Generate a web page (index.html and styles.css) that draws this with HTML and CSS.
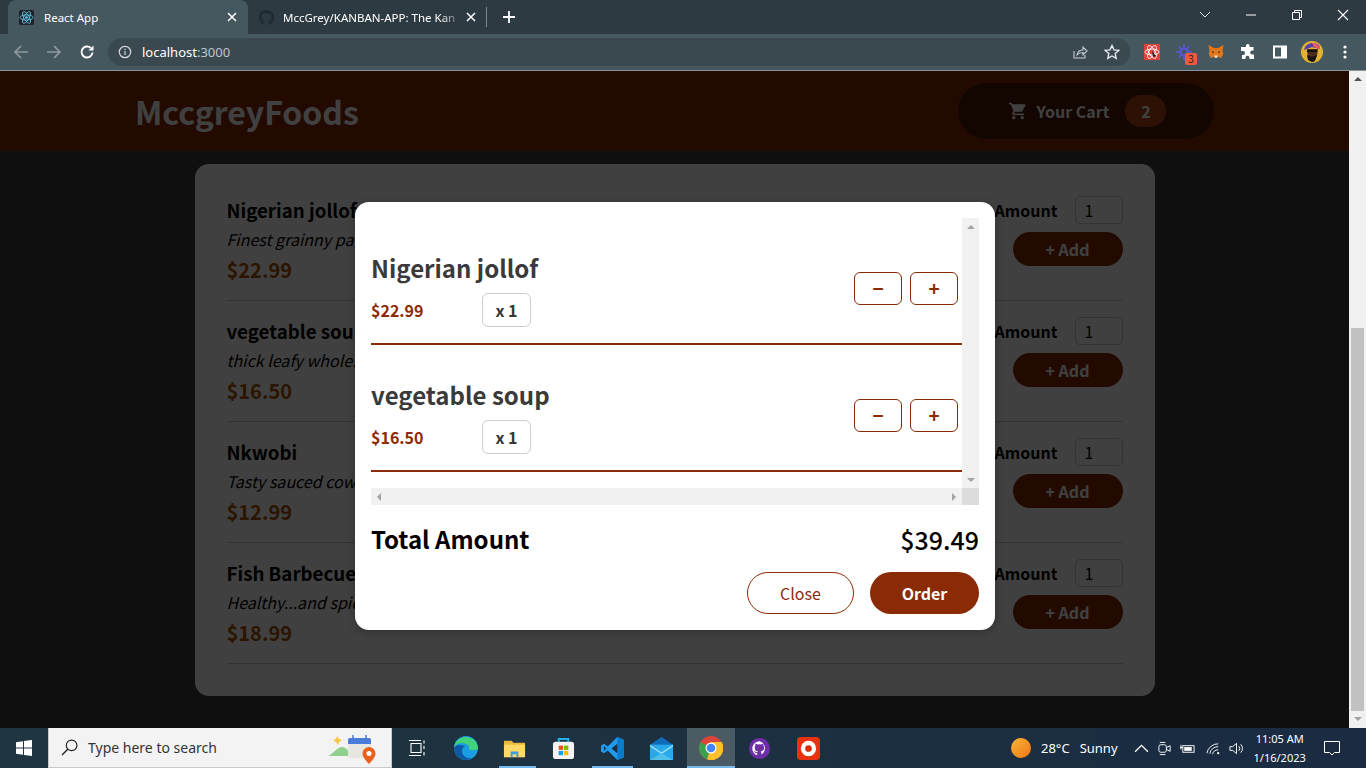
FILE: index.html
```html
<!DOCTYPE html>
<html lang="en">
<head>
    <meta charset="UTF-8">
    <meta name="viewport" content="width=device-width, initial-scale=1.0">
    <title>React App</title>
    <link rel="stylesheet" href="styles.css">
</head>
<body>
    <!-- browser chrome -->
    <div class="tabstrip">
        <div class="tab tab-active">
            <svg class="favicon" viewBox="0 0 16 16"><rect width="16" height="16" rx="2" fill="#20232a"/><g fill="none" stroke="#61dafb" stroke-width=".8"><ellipse cx="8" cy="8" rx="7" ry="2.8"/><ellipse cx="8" cy="8" rx="7" ry="2.8" transform="rotate(60 8 8)"/><ellipse cx="8" cy="8" rx="7" ry="2.8" transform="rotate(120 8 8)"/></g><circle cx="8" cy="8" r="1.4" fill="#61dafb"/></svg>
            <span class="tab-title">React App</span>
            <svg class="tab-close" viewBox="0 0 10 10"><path d="M1 1l8 8M9 1l-8 8" stroke="#fff" stroke-width="1.5"/></svg>
        </div>
        <div class="tab tab-other">
            <svg class="favicon" viewBox="0 0 16 16"><path fill="#202a30" d="M8 0a8 8 0 0 0-2.5 15.6c.4.1.5-.2.5-.4v-1.4c-2.2.5-2.7-1-2.7-1-.4-.9-.9-1.200-.9-1.200-.7-.5.1-.5.1-.5.8.1 1.200.8 1.200.8.7 1.200 1.900.9 2.300.7.1-.5.300-.9.500-1.100-1.800-.2-3.600-.9-3.600-4 0-.9.300-1.600.8-2.100-.1-.2-.4-1 .1-2.100 0 0 .7-.2 2.200.8a7.600 7.600 0 0 1 4 0c1.500-1 2.200-.8 2.200-.8.400 1.100.200 1.900.100 2.100.5.500.8 1.200.8 2.100 0 3.100-1.900 3.800-3.700 4 .3.300.6.800.6 1.500v2.200c0 .2.100.5.600.4A8 8 0 0 0 8 0z"/></svg>
            <span class="tab-title">MccGrey/KANBAN-APP: The Kan</span>
            <svg class="tab-close" viewBox="0 0 10 10"><path d="M1 1l8 8M9 1l-8 8" stroke="#fff" stroke-width="1.5"/></svg>
        </div>
        <span class="tab-sep"></span>
        <svg class="new-tab" viewBox="0 0 12 12"><path d="M6 0v12M0 6h12" stroke="#fff" stroke-width="1.800"/></svg>
        <div class="window-btns">
            <svg viewBox="0 0 46 16"><path d="M18 5l5 5 5-5" fill="none" stroke="#e8eaed"/></svg>
            <svg viewBox="0 0 46 16"><path d="M18 8h10" stroke="#fff"/></svg>
            <svg viewBox="0 0 46 16"><path d="M18.500 5.500h7v7h-7zM20.500 5.500v-2h7v7h-2" fill="none" stroke="#fff"/></svg>
            <svg viewBox="0 0 46 16"><path d="M18 3l10 10M28 3l-10 10" stroke="#fff" stroke-width="1.100"/></svg>
        </div>
    </div>
    <div class="toolbar">
        <svg class="nav-icon" viewBox="0 0 16 16"><path d="M15 8H2M8 2L2 8l6 6" fill="none" stroke="#8d999f" stroke-width="1.700"/></svg>
        <svg class="nav-icon" viewBox="0 0 16 16"><path d="M1 8h13M8 2l6 6-6 6" fill="none" stroke="#8d999f" stroke-width="1.700"/></svg>
        <svg class="nav-icon" viewBox="0 0 16 16"><path d="M13.500 8.500A5.500 5.500 0 1 1 11.800 4" fill="none" stroke="#fff" stroke-width="1.900"/><path d="M14.500 1.500v5h-5z" fill="#fff"/></svg>
        <div class="omnibox">
            <svg class="info-icon" viewBox="0 0 14 14"><circle cx="7" cy="7" r="5.700" fill="none" stroke="#d5d9db" stroke-width="1.200"/><path d="M7 6v4M7 3.800v1.300" stroke="#d5d9db" stroke-width="1.200"/></svg>
            <span class="url">localhost<span class="url-port">:3000</span></span>
            <svg class="omni-icon share" viewBox="0 0 16 16"><path d="M2 7v7h11v-3" fill="none" stroke="#c5cbce" stroke-width="1.100"/><path d="M5 11c.5-3 3-5 6-5V3l4 4-4 4V8.500c-2.500 0-4.500.8-6 2.500z" fill="none" stroke="#c5cbce" stroke-width="1.100"/></svg>
            <svg class="omni-icon" viewBox="0 0 16 16"><path d="M8 1.500l2 4.400 4.800.5-3.600 3.200 1 4.700L8 12l-4.200 2.300 1-4.700L1.200 6.400 6 5.900z" fill="none" stroke="#e8eaed" stroke-width="1.400"/></svg>
        </div>
        <div class="extensions">
            <svg class="ext ext-first" viewBox="0 0 16 16"><rect width="16" height="16" fill="#e2403a"/><g fill="none" stroke="#fff" stroke-width=".9"><ellipse cx="8" cy="8" rx="7" ry="3"/><ellipse cx="8" cy="8" rx="7" ry="3" transform="rotate(60 8 8)"/><ellipse cx="8" cy="8" rx="7" ry="3" transform="rotate(120 8 8)"/></g><path d="M8 7l4 5-3 1z" fill="#222"/></svg>
            <span class="ext-wrap">
                <svg class="ext" viewBox="0 0 16 16"><circle cx="8" cy="8" r="3.600" fill="none" stroke="#5b55e0" stroke-width="2"/><path d="M8 0v4M8 12v4M0 8h4M12 8h4M2.300 2.300l2.800 2.800M10.900 10.900l2.800 2.800M13.700 2.300l-2.800 2.800M5.100 10.900l-2.800 2.800" stroke="#5b55e0" stroke-width="1.500"/></svg>
                <span class="ext-badge">3</span>
            </span>
            <svg class="ext" viewBox="0 0 16 16"><path d="M.5 1l5.500 3h4l5.500-3-1 6 .8 3-2 4-2.800-1H5.500l-2.800 1-2-4 .8-3z" fill="#e2761b"/><path d="M4 7l2.500 1-2 1.500zM12 7l-2.500 1 2 1.500z" fill="#5a3a1e"/><path d="M6 11.500h4L9 14H7z" fill="#e8d9c6"/></svg>
            <svg class="ext" viewBox="0 0 16 16"><path fill="#fff" d="M6 1.500a1.800 1.800 0 0 1 3.500 0V3h4v3.500h-1.300a2 2 0 0 0 0 4H14V15H9.500v-1.300a2 2 0 0 0-4 0V15H2v-4h1a2 2 0 0 0 0-4H1V3h5z"/></svg>
            <svg class="ext" viewBox="0 0 16 16"><rect x="1" y="1.500" width="14" height="13" fill="#fff"/><rect x="3" y="3.500" width="6" height="9" fill="#46585f"/></svg>
            <svg class="avatar" viewBox="0 0 22 22"><circle cx="11" cy="11" r="11" fill="#e0b22f"/><path d="M3 9C4 2 13 0 18 4l1 4-8-2z" fill="#5a3fa8"/><path d="M11 2c4 0 7 2 8 6l-6-2z" fill="#ef5a6f"/><path d="M6 8h11l-1 7-4 6-5-3z" fill="#4a2c1c"/><path d="M6 9h10v2H6zM6 14c3 2 7 2 10 0l-2 6-3 1-4-2z" fill="#14100e"/></svg>
            <svg class="menu-dots" viewBox="0 0 4 14"><circle cx="2" cy="2" r="1.600" fill="#fff"/><circle cx="2" cy="7" r="1.600" fill="#fff"/><circle cx="2" cy="12" r="1.600" fill="#fff"/></svg>
        </div>
    </div>

    <!-- the page itself -->
    <div class="viewport">
        <div class="page">
            <header class="site-header">
                <h1 class="logo">MccgreyFoods</h1>
                <button class="cart-btn">
                    <svg class="cart-icon" viewBox="0 0 24 24"><path fill="#fff" d="M7 18a2 2 0 1 0 0 4 2 2 0 0 0 0-4zM1 2v2h2l3.600 7.600L5.200 14c-.1.300-.2.600-.2 1 0 1.100.9 2 2 2h12v-2H7.400c-.1 0-.2-.1-.2-.2v-.1L8.100 13h7.500c.7 0 1.400-.4 1.700-1l3.600-6.500c.1-.1.100-.3.100-.5 0-.6-.4-1-1-1H5.200l-.9-2H1zm16 16a2 2 0 1 0 0 4 2 2 0 0 0 0-4z"/></svg>
                    <span>Your Cart</span>
                    <span class="cart-count">2</span>
                </button>
            </header>
            <main class="meals-card">
                <div class="meal">
                    <div class="meal-info">
                        <h3>Nigerian jollof</h3>
                        <div class="meal-desc">Finest grainny parboiled rice</div>
                        <div class="meal-price">$22.99</div>
                    </div>
                    <form class="meal-form">
                        <label class="amount"><span>Amount</span><span class="amount-input">1</span></label>
                        <span class="add-btn">+ Add</span>
                    </form>
                </div>
                <div class="meal">
                    <div class="meal-info">
                        <h3>vegetable soup</h3>
                        <div class="meal-desc">thick leafy wholesome soup</div>
                        <div class="meal-price">$16.50</div>
                    </div>
                    <form class="meal-form">
                        <label class="amount"><span>Amount</span><span class="amount-input">1</span></label>
                        <span class="add-btn">+ Add</span>
                    </form>
                </div>
                <div class="meal">
                    <div class="meal-info">
                        <h3>Nkwobi</h3>
                        <div class="meal-desc">Tasty sauced cow foot</div>
                        <div class="meal-price">$12.99</div>
                    </div>
                    <form class="meal-form">
                        <label class="amount"><span>Amount</span><span class="amount-input">1</span></label>
                        <span class="add-btn">+ Add</span>
                    </form>
                </div>
                <div class="meal">
                    <div class="meal-info">
                        <h3>Fish Barbecue</h3>
                        <div class="meal-desc">Healthy...and spicy</div>
                        <div class="meal-price">$18.99</div>
                    </div>
                    <form class="meal-form">
                        <label class="amount"><span>Amount</span><span class="amount-input">1</span></label>
                        <span class="add-btn">+ Add</span>
                    </form>
                </div>
            </main>
        </div>
        <div class="page-scrollbar">
            <span class="arrow arrow-up arrow-dark"></span>
            <span class="page-thumb"></span>
            <span class="arrow arrow-down arrow-page"></span>
        </div>

        <div class="backdrop"></div>
        <div class="modal">
            <div class="cart-scroll">
                <div class="cart-items">
                    <div class="cart-item">
                        <div>
                            <h2>Nigerian jollof</h2>
                            <div class="cart-summary">
                                <span class="cart-price">$22.99</span>
                                <span class="cart-qty">x 1</span>
                            </div>
                        </div>
                        <div class="cart-actions">
                            <span class="qty-btn">−</span>
                            <span class="qty-btn">+</span>
                        </div>
                    </div>
                    <div class="cart-item">
                        <div>
                            <h2>vegetable soup</h2>
                            <div class="cart-summary">
                                <span class="cart-price">$16.50</span>
                                <span class="cart-qty">x 1</span>
                            </div>
                        </div>
                        <div class="cart-actions">
                            <span class="qty-btn">−</span>
                            <span class="qty-btn">+</span>
                        </div>
                    </div>
                </div>
                <div class="vbar"><span class="arrow arrow-up"></span><span class="arrow arrow-down"></span></div>
                <div class="hbar"><span class="arrow arrow-left"></span><span class="arrow arrow-right"></span></div>
                <div class="corner"></div>
            </div>
            <div class="total">
                <span>Total Amount</span>
                <span class="total-value">$39.49</span>
            </div>
            <div class="modal-actions">
                <span class="btn-close">Close</span>
                <span class="btn-order">Order</span>
            </div>
        </div>
    </div>

    <!-- windows taskbar -->
    <footer class="taskbar">
        <svg class="win-logo" viewBox="0 0 16 16"><path fill="#fff" d="M0 2.200l7-1v6.300H0zM8 1l8-1.100v7.600H8zM0 8.500h7v6.300l-7-1zM8 8.500h8V16l-8-1.100z"/></svg>
        <div class="searchbox">
            <svg class="search-icon" viewBox="0 0 16 16"><circle cx="10" cy="6" r="5" fill="none" stroke="#222" stroke-width="1.100"/><path d="M6.300 9.700L1 15" stroke="#222" stroke-width="1.300"/></svg>
            <span class="search-text">Type here to search</span>
            <svg class="search-art" viewBox="0 0 50 32"><path d="M1 24c4-1 9-9 14-9 4 0 8 5 9 9z" fill="#8fd28f"/><path d="M6 8l3-1 1-3 2 3 3 1-3 2-1 3-2-3z" fill="#f7c83e"/><rect x="21" y="6" width="23" height="20" rx="2" fill="#e8e6e0"/><path d="M21 8a2 2 0 0 1 2-2h19a2 2 0 0 1 2 2v4H21z" fill="#4a7bd8"/><path d="M26 3v5M39 3v5" stroke="#4a7bd8" stroke-width="1.500"/><path d="M42 15a6.500 6.500 0 0 0-6.500 6.500C35.500 26 42 32 42 32s6.500-6 6.500-10.500A6.500 6.500 0 0 0 42 15z" fill="#e8621c"/><circle cx="42" cy="21.500" r="2.500" fill="#fff"/></svg>
        </div>
        <div class="task-apps">
            <span class="task-app">
                <svg class="task-icon task-icon-sm" viewBox="0 0 16 16"><path d="M2 3.500h10v9H2zM0 .5h12M0 15.500h12M15 .5v3M15 6v3M15 12v3.500" fill="none" stroke="#fff" stroke-width="1.100"/></svg>
            </span>
            <span class="task-app">
                <svg class="task-icon task-icon-lg" viewBox="0 0 24 24"><circle cx="12" cy="12" r="12" fill="#1b9de2"/><path d="M24 13c0-7-5-12-12-12C6 1 1 5 0 11c3-4 8-5 12-3 3 1 4 4 3 6h7z" fill="#41d37c"/><path d="M0 12c0 7 6 12 12 12 2 0 4-1 6-2-5 1-10-2-10-7 0-2 1-4 3-5C6 8 1 9 0 12z" fill="#0c59a4"/></svg>
            </span>
            <span class="task-app task-open task-open-short">
                <svg class="task-icon" viewBox="0 0 24 24"><path d="M1 4h8l2 2h12v15H1z" fill="#e8b93e"/><rect x="1" y="8" width="22" height="13" fill="#ffd965"/><path d="M8 21v-6h8v6h-2v-3h-4v3z" fill="#3f9be0"/></svg>
            </span>
            <span class="task-app">
                <svg class="task-icon" viewBox="0 0 24 24"><path d="M7 5V2h10v3" fill="none" stroke="#1fb4e8" stroke-width="2"/><rect x="1" y="5" width="22" height="18" rx="3" fill="#f4f4f4"/><rect x="7" y="9" width="4.500" height="4.500" fill="#f25022"/><rect x="12.500" y="9" width="4.500" height="4.500" fill="#7fba00"/><rect x="7" y="14.500" width="4.500" height="4.500" fill="#00a4ef"/><rect x="12.500" y="14.500" width="4.500" height="4.500" fill="#ffb900"/></svg>
            </span>
            <span class="task-app task-open">
                <svg class="task-icon" viewBox="0 0 24 24"><path d="M17 0l7 3v18l-7 3L7 14l-4 3-3-2V9l3-2 4 3z" fill="#1f9cf0"/><path d="M17 0l7 3v18l-7 3z" fill="#0b7ccb"/><path d="M17 7l-6 5 6 5z" fill="#1e2f3b"/><path d="M3 9.500L5.500 12 3 14.500z" fill="#1e2f3b"/></svg>
            </span>
            <span class="task-app">
                <svg class="task-icon" viewBox="0 0 24 24"><path d="M0 8l12-8 12 8v16H0z" fill="#0f6cbd"/><path d="M0 8h24v16H0z" fill="#28a8ea"/><path d="M0 8l12 8 12-8v2l-12 8L0 10z" fill="#8fdcf7"/><path d="M12 17l12 7H0z" fill="#50c0ec"/></svg>
            </span>
            <span class="task-app task-open task-active">
                <svg class="task-icon task-icon-lg" viewBox="0 0 24 24"><circle cx="12" cy="12" r="12" fill="#db4437"/><path d="M12 12L1.600 6A12 12 0 0 0 8 23.300z" fill="#3a9f4e"/><path d="M12 6h10.700A12 12 0 0 1 8 23.300L12 12z" fill="#fbc02d"/><circle cx="12" cy="12" r="5.500" fill="#fff"/><circle cx="12" cy="12" r="4.300" fill="#4285f4"/></svg>
            </span>
            <span class="task-app">
                <svg class="task-icon" viewBox="0 0 24 24"><circle cx="12" cy="12" r="11" fill="#6f2da8"/><path fill="#fff" d="M12 4.500a7.500 7.500 0 0 0-2.400 14.600v-2.300c-1.800.4-2.300-.8-2.300-.8-.4-1-.9-1.200-.9-1.200-.7-.4.100-.4.100-.4.800 0 1.200.8 1.200.8.700 1.100 1.800.8 2.200.6.100-.5.300-.8.500-1-1.700-.2-3.400-.9-3.400-3.700 0-.8.300-1.500.8-2-.1-.2-.4-1 .1-2 0 0 .6-.2 2.100.8a7 7 0 0 1 3.800 0c1.500-1 2.100-.8 2.100-.8.400 1 .2 1.800.1 2 .5.500.8 1.200.8 2 0 2.900-1.800 3.500-3.400 3.700.3.200.5.700.5 1.400v2.100A7.500 7.500 0 0 0 12 4.500z"/></svg>
            </span>
            <span class="task-app">
                <svg class="task-icon" viewBox="0 0 24 24"><rect width="24" height="24" rx="4" fill="#e8320f"/><circle cx="12" cy="12" r="8" fill="#fff"/><circle cx="12" cy="12" r="3.500" fill="#d92d0c"/></svg>
            </span>
        </div>
        <div class="tray">
            <span class="sun"></span>
            <span class="weather">28°C</span>
            <span class="weather weather-word">Sunny</span>
            <svg class="tray-icon chevron" viewBox="0 0 14 14"><path d="M1 10l6-6 6 6" fill="none" stroke="#fff" stroke-width="1.200"/></svg>
            <svg class="tray-icon" viewBox="0 0 16 16"><rect x="2" y="4" width="8" height="8" rx="2" fill="none" stroke="#fff"/><path d="M10 7l4-2v6l-4-2M3 1.500h6M3 14.500h6" fill="none" stroke="#fff"/></svg>
            <svg class="tray-icon" viewBox="0 0 16 16"><rect x="3" y="5" width="12" height="7" fill="none" stroke="#fff"/><rect x="4.500" y="6.500" width="8" height="4" fill="#fff"/><path d="M0 7h3M1 4v5" stroke="#fff"/></svg>
            <svg class="tray-icon tray-wifi" viewBox="0 0 16 16"><path d="M1 13a12 12 0 0 1 12-10M4 13.500a9 9 0 0 1 9-7.500M7 14a5.500 5.500 0 0 1 6-4.500" fill="none" stroke="#fff"/><circle cx="13" cy="13" r="1.200" fill="#fff"/></svg>
            <svg class="tray-icon" viewBox="0 0 16 16"><path d="M1 6h3l4-3.500v11L4 10H1zM10.500 5.500a4 4 0 0 1 0 5M12.500 3.500a7 7 0 0 1 0 9" fill="none" stroke="#fff"/></svg>
            <div class="clock"><div>11:05 AM</div><div>1/16/2023</div></div>
            <svg class="notify" viewBox="0 0 16 16"><path d="M.5 1.500h15v11h-5L8 15l-2.500-2.500h-5z" fill="none" stroke="#fff"/></svg>
        </div>
    </footer>
</body>
</html>
```

FILE: styles.css
```css
* {
    box-sizing: border-box;
}

html, body {
    height: 100%;
    margin: 0;
    overflow: hidden;
}

body {
    display: flex;
    flex-direction: column;
    font-family: "Noto Sans CJK SC", "Source Sans Pro", "Noto Sans", sans-serif;
}

/* ---- browser chrome ---- */
.tabstrip {
    height: 34px;
    flex: none;
    display: flex;
    align-items: flex-end;
    padding-left: 8px;
    background: #2e3a41;
    font-family: "Noto Sans", "Liberation Sans", sans-serif;
    font-size: 11.5px;
    color: #fff;
}

.tab {
    height: 34px;
    display: flex;
    align-items: center;
}

.tab-active {
    width: 240px;
    padding: 0 11px;
    background: #46585f;
    border-radius: 8px 8px 0 0;
}

.tab-other {
    width: 238px;
    padding: 0 10px 0 11px;
}

.favicon {
    width: 15px;
    height: 15px;
    flex: none;
}

.tab-title {
    flex: 1;
    margin-left: 10px;
    white-space: nowrap;
}

.tab-other .tab-title {
    margin-left: 9px;
    -webkit-mask-image: linear-gradient(90deg, #000 88%, transparent);
    mask-image: linear-gradient(90deg, #000 88%, transparent);
}

.tab-close {
    width: 10px;
    height: 10px;
    flex: none;
    margin-left: 4px;
}

.tab-sep {
    width: 1px;
    height: 20px;
    margin: 0 16px 7px 0;
    background: #7b878d;
}

.new-tab {
    width: 12px;
    height: 12px;
    margin-bottom: 11px;
}

.window-btns {
    margin-left: auto;
    display: flex;
    align-self: center;
    margin-top: -5px;
}

.window-btns svg {
    width: 46px;
    height: 16px;
}

.toolbar {
    height: 37px;
    flex: none;
    display: flex;
    align-items: center;
    padding: 0 0 1px 13px;
    background: #46585f;
    border-bottom: 1px solid #8a969b;
}

.nav-icon {
    width: 16px;
    height: 16px;
    margin-right: 17px;
}

.omnibox {
    width: 1022px;
    height: 28px;
    margin-left: -4px;
    margin-top: 1px;
    display: flex;
    align-items: center;
    padding: 0 10px;
    background: #3a4850;
    border-radius: 14px;
}

.info-icon {
    width: 14px;
    height: 14px;
}

.url {
    flex: 1;
    margin-left: 10px;
    font-family: "Noto Sans", "Liberation Sans", sans-serif;
    font-size: 13px;
    color: #fff;
}

.url-port {
    color: #c0c6c9;
}

.omni-icon {
    width: 16px;
    height: 16px;
    margin-left: 16px;
}

.extensions {
    display: flex;
    align-items: center;
    margin-left: 14px;
}

.ext {
    width: 16px;
    height: 16px;
    display: block;
    margin-right: 16px;
}

.ext-wrap {
    position: relative;
}

.ext-badge {
    position: absolute;
    left: 9px;
    top: 9px;
    width: 12px;
    height: 12px;
    border-radius: 2px;
    background: #f05a3c;
    color: #222;
    font-size: 10px;
    line-height: 12px;
    text-align: center;
}

.avatar {
    width: 22px;
    height: 22px;
    margin-right: 20px;
    margin-left: -3px;
}

.menu-dots {
    width: 4px;
    height: 14px;
}

/* ---- page ---- */
.viewport {
    flex: 1;
    min-height: 0;
    position: relative;
    display: flex;
}

.page {
    flex: 1;
    background: #3f3f3f;
}

.site-header {
    height: 80px;
    display: flex;
    align-items: center;
    justify-content: space-between;
    padding: 0 135px;
    background: #8a2b06;
    color: #fff;
}

.logo {
    margin: 0;
    font-size: 32px;
    font-weight: 700;
}

.cart-btn {
    width: 256px;
    height: 56px;
    display: flex;
    align-items: center;
    justify-content: center;
    padding: 0 0 0 2px;
    border: none;
    border-radius: 28px;
    background: #4d1601;
    color: #fff;
    font: inherit;
    font-size: 16px;
    font-weight: 700;
}

.cart-icon {
    width: 20px;
    height: 20px;
    margin-right: 9px;
}

.cart-count {
    width: 41px;
    height: 32px;
    margin-left: 16px;
    border-radius: 16px;
    background: #b94517;
    line-height: 32px;
}

.meals-card {
    width: 960px;
    margin: 13px auto 0;
    padding: 16px 32px 32px;
    background: #fff;
    border-radius: 14px;
}

.meal {
    height: 121px;
    display: flex;
    justify-content: space-between;
    padding-top: 15px;
    border-bottom: 1px solid #ccc;
}

.meal h3 {
    margin: 0;
    font-size: 18.72px;
    line-height: 30px;
    font-weight: 700;
    color: #000;
}

.meal-desc {
    font-size: 16px;
    font-style: italic;
    line-height: 28px;
    color: #000;
}

.meal-price {
    font-size: 20px;
    font-weight: 700;
    line-height: 34px;
    color: #ad5502;
}

.meal-form {
    display: flex;
    flex-direction: column;
    align-items: flex-end;
}

.amount {
    display: flex;
    align-items: center;
    font-size: 16px;
    font-weight: 700;
    height: 30px;
}

.amount-input {
    width: 48px;
    height: 28px;
    margin-left: 17px;
    padding-left: 9px;
    border: 1px solid #ccc;
    border-radius: 5px;
    font-size: 16px;
    font-weight: 400;
    line-height: 26px;
}

.add-btn {
    width: 110px;
    height: 34px;
    margin-top: 7px;
    border-radius: 17px;
    background: #8a2b06;
    color: #fff;
    font-size: 16px;
    font-weight: 700;
    line-height: 34px;
    text-align: center;
}

.page-scrollbar {
    width: 17px;
    flex: none;
    display: flex;
    flex-direction: column;
    align-items: center;
    background: #f1f1f1;
}

.page-thumb {
    width: 13px;
    height: 383px;
    margin-top: auto;
    background: #c1c1c1;
}

.arrow {
    display: block;
    width: 0;
    height: 0;
    flex: none;
    border-style: solid;
    border-color: transparent;
}

.arrow-up {
    border-width: 0 4px 4px;
    border-bottom-color: #a3a3a3;
    margin-top: 7px;
}

.arrow-dark {
    border-bottom-color: #505050;
    margin-top: 6px;
}

.arrow-down {
    border-width: 4px 4px 0;
    border-top-color: #a3a3a3;
    margin: 5px 0 6px;
}

.arrow-page {
    margin: 6px 0 7px;
}

.arrow-left {
    border-width: 4px 4px 4px 0;
    border-right-color: #a3a3a3;
}

.arrow-right {
    border-width: 4px 0 4px 4px;
    border-left-color: #a3a3a3;
}

/* ---- cart modal ---- */
.backdrop {
    position: absolute;
    top: 0;
    left: 0;
    right: 17px;
    bottom: 0;
    background: rgba(0, 0, 0, 0.75);
}

.modal {
    position: absolute;
    top: 131px;
    left: 355px;
    width: 640px;
    height: 428px;
    padding: 16px;
    background: #fff;
    border-radius: 14px;
    box-shadow: 0 2px 8px rgba(0, 0, 0, 0.25);
}

.cart-scroll {
    height: 287px;
    display: grid;
    grid-template-columns: 1fr 17px;
    grid-template-rows: 1fr 17px;
}

.cart-items {
    overflow: hidden;
}

.cart-item {
    height: 127px;
    display: flex;
    align-items: center;
    justify-content: space-between;
    padding: 16px 4px 0 0;
    border-bottom: 2px solid #8a2b06;
}

.cart-item h2 {
    margin: -1px 0 7px;
    font-size: 24px;
    line-height: 36px;
    font-weight: 700;
    color: #3a3a3a;
}

.cart-summary {
    display: flex;
    align-items: center;
}

.cart-price {
    width: 111px;
    font-size: 16px;
    font-weight: 700;
    color: #8e2b06;
}

.cart-qty {
    width: 49px;
    height: 34px;
    border: 1px solid #ccc;
    border-radius: 6px;
    font-size: 16px;
    font-weight: 700;
    line-height: 32px;
    text-align: center;
    color: #363636;
}

.cart-actions {
    display: flex;
    gap: 8px;
}

.qty-btn {
    width: 48px;
    height: 33px;
    border: 1px solid #8a2b06;
    border-radius: 6px;
    color: #8a2b06;
    font-size: 19px;
    font-weight: 700;
    line-height: 30px;
    text-align: center;
}

.vbar {
    display: flex;
    flex-direction: column;
    align-items: center;
    justify-content: space-between;
    background: #f1f1f1;
}

.hbar {
    display: flex;
    align-items: center;
    justify-content: space-between;
    padding: 0 6px;
    background: #f1f1f1;
}

.corner {
    background: #dcdcdc;
}

.total {
    display: flex;
    justify-content: space-between;
    align-items: center;
    margin-top: 12px;
    font-size: 24px;
    line-height: 44px;
    font-weight: 700;
    color: #000;
}

.total-value {
    font-size: 25px;
    font-weight: 500;
}

.modal-actions {
    display: flex;
    justify-content: flex-end;
    gap: 16px;
    margin-top: 11px;
}

.btn-close,
.btn-order {
    height: 42px;
    border-radius: 21px;
    font-size: 16px;
    line-height: 42px;
    text-align: center;
}

.btn-close {
    width: 107px;
    border: 1px solid #8a2b06;
    line-height: 40px;
    color: #8a2b06;
}

.btn-order {
    width: 109px;
    background: #8a2b06;
    color: #fff;
    font-weight: 700;
}

/* ---- taskbar ---- */
.taskbar {
    height: 40px;
    flex: none;
    display: flex;
    align-items: center;
    background: linear-gradient(90deg, #1f3640, #1d3040 50%, #1a2b42);
    font-family: "Noto Sans", "Liberation Sans", sans-serif;
    color: #fff;
}

.win-logo {
    width: 16px;
    height: 16px;
    margin: 0 16px;
}

.searchbox {
    width: 344px;
    height: 40px;
    display: flex;
    align-items: center;
    padding-left: 12px;
    background: #f3f3f3;
    border: 1px solid #c9c9c9;
    border-top: none;
    color: #333;
}

.search-icon {
    width: 17px;
    height: 17px;
}

.search-text {
    flex: 1;
    margin-left: 10px;
    font-size: 14px;
}

.search-art {
    width: 50px;
    height: 32px;
    margin-right: 14px;
}

.task-apps {
    display: flex;
}

.task-app {
    width: 49px;
    height: 40px;
    position: relative;
    display: flex;
    align-items: center;
    justify-content: center;
}

.task-open::after {
    content: "";
    position: absolute;
    left: 4px;
    right: 4px;
    bottom: 0;
    height: 2px;
    background: #76b9ed;
}

.task-open-short::after {
    left: 9px;
    right: 3px;
}

.task-active {
    background: #4a5b63;
    width: 48px;
    margin-left: 1px;
}

.task-active::after {
    left: 0;
    right: 0;
}

.task-icon {
    width: 23px;
    height: 23px;
}

.task-icon-lg {
    width: 24px;
    height: 24px;
}

.task-icon-sm {
    width: 16px;
    height: 16px;
}

.tray {
    flex: 1;
    display: flex;
    align-items: center;
    padding-left: 178px;
    font-size: 13px;
}

.sun {
    width: 20px;
    height: 20px;
    border-radius: 50%;
    background: linear-gradient(135deg, #f7b733, #f0741a);
}

.weather {
    margin-left: 10px;
}

.weather-word {
    margin-left: 10px;
}

.tray-icon {
    width: 15px;
    height: 15px;
    margin-left: 8px;
}

.chevron {
    margin-left: 16px;
}

.tray-wifi {
    margin-left: 11px;
}

.clock {
    margin-left: 10px;
    font-size: 11px;
    line-height: 19px;
    text-align: center;
}

.notify {
    width: 16px;
    height: 16px;
    margin-left: 18px;
}
```
